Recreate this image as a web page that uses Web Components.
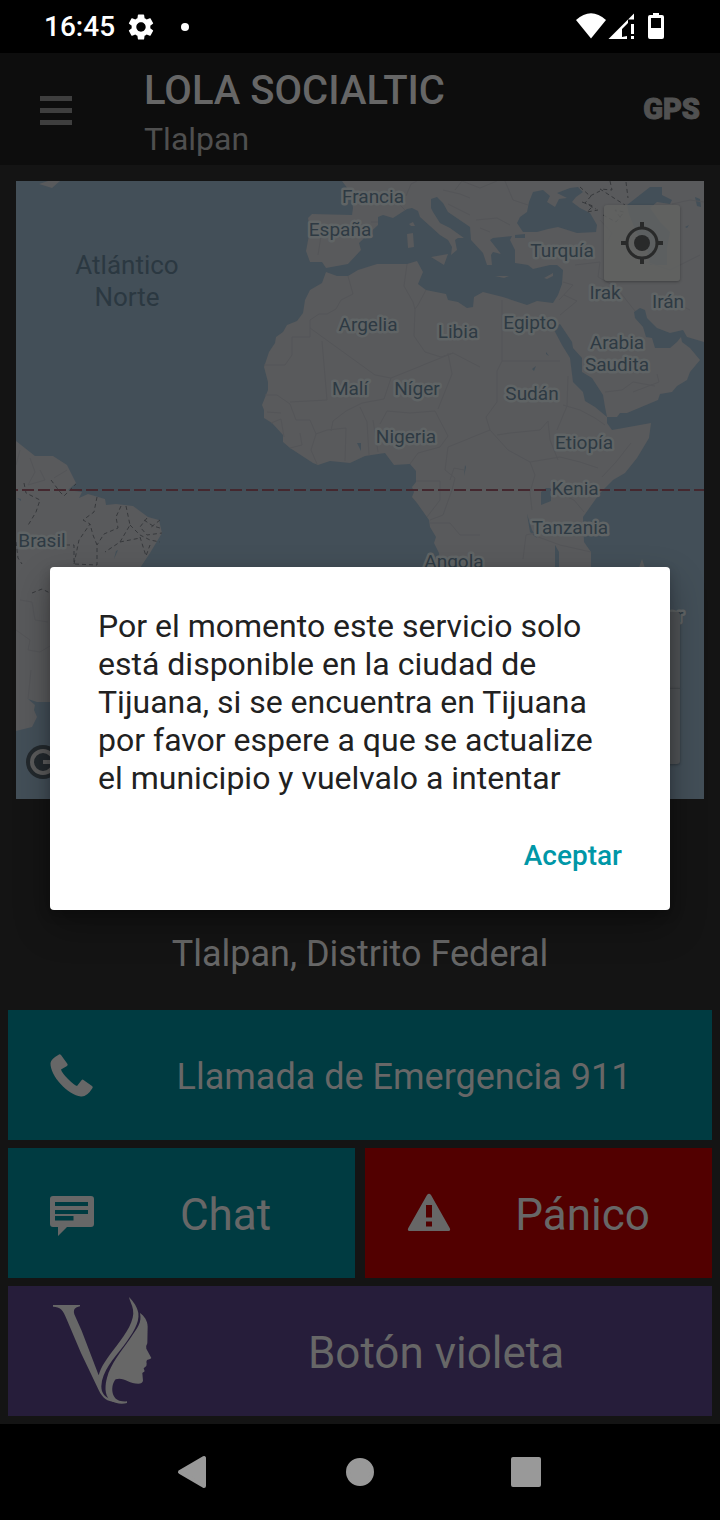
<!DOCTYPE html>
<html lang="es">
<head>
<meta charset="utf-8">
<meta name="viewport" content="width=device-width, initial-scale=1">
<title>Lola Socialtic</title>
<style>
  html, body { margin: 0; background: #141414; }
  body { font-family: Roboto, "Noto Sans", sans-serif; }
</style>
</head>
<body>
<lola-app></lola-app>

<template id="t-app">
  <style>
    :host { display: flex; flex-direction: column; min-height: 100vh; position: relative; background: #141414; color: #666; }
    main { flex: 1; display: flex; flex-direction: column; padding: 16px 8px 8px; }
    world-map { margin: 0 8px; }
    .place { flex: 1; display: flex; align-items: flex-end; justify-content: center; margin: 0; padding-bottom: 35px; font-size: 36px; line-height: 42px; color: #676767; }
    .actions { display: grid; grid-template-columns: 1fr 1fr; gap: 8px 10px; }
    .wide { grid-column: 1 / -1; }
    svg { display: block; width: 100%; }
  </style>
  <status-bar></status-bar>
  <app-header>
    <span slot="title">LOLA SOCIALTIC</span>
    <span slot="subtitle">Tlalpan</span>
  </app-header>
  <main>
    <world-map></world-map>
    <p class="place">Tlalpan, Distrito Federal</p>
    <div class="actions">
      <action-button class="wide" tone="teal">
        <svg slot="icon" viewBox="0 0 48 48" fill="#676767" aria-hidden="true"><path d="M11 3.500Q12 3 13 4L19.500 13Q20 14 19 15L13 18.500Q14 22 20 28Q26 34 29 35L33.500 29.200Q34.500 28 35.500 29L44 35Q45.300 36 44.500 37Q39 46 33 45.500C20 44 2 25 2.500 12Q3 8 11 3.500Z"/></svg>
        Llamada de Emergencia 911
      </action-button>
      <action-button tone="teal" size="large">
        <svg slot="icon" viewBox="0 0 48 48" fill="#676767" aria-hidden="true"><path fill-rule="evenodd" d="M5 7H43Q46 7 46 10V35Q46 38 43 38H19L10 47V38H5Q2 38 2 35V10Q2 7 5 7ZM7 13V17H40V13ZM7 21V25H40V21ZM7 27V31.500H25.500V27Z"/></svg>
        Chat
      </action-button>
      <action-button tone="red" size="large">
        <svg slot="icon" viewBox="0 0 48 48" fill="#676767" aria-hidden="true"><path fill-rule="evenodd" d="M22 6Q24 3.500 26 6L44.700 39Q46 42 43.500 42H4.500Q2 42 3.300 39ZM21 16V28.500H27V16ZM21 32.500V37.500H27V32.500Z"/></svg>
        Pánico
      </action-button>
      <action-button class="wide" tone="violet" size="large">
        <svg slot="icon" viewBox="144 45 336 336" fill="#676767" aria-hidden="true">
          <path d="M159 75H240V79C225 82 219 88 223 103L245 152L296 286C302 260 323 232 350 197C379 160 405 119 399 89C397 74 389 63 387 51C400 64 412 81 415 99C419 130 398 160 371 197C342 236 306 271 304 319C304 338 313 352 331 356L347 367C320 363 309 355 297 332L243 219L200 118C190 90 180 80 159 80Z"/>
          <path d="M420 99C433 108 443 123 443 140L442 190Q437 198 439 206L454 234Q453 237 441 240Q438 245 440 251L439 258L431 265L434 274L427 279L429 302Q427 311 415 311C386 311 370 290 347 298C330 318 335 356 358 362Q370 365 381 364V369C368 373 344 372 331 360C311 347 316 310 321 293C332 251 362 216 390 176C413 143 426 128 420 99Z"/>
        </svg>
        Botón violeta
      </action-button>
    </div>
  </main>
  <nav-bar></nav-bar>
  <alert-dialog>
    Por el momento este servicio solo está disponible en la ciudad de Tijuana, si se encuentra en Tijuana por favor espere a que se actualize el municipio y vuelvalo a intentar
    <span slot="action">Aceptar</span>
  </alert-dialog>
</template>

<template id="t-status">
  <style>
    :host { display: flex; align-items: center; height: 53px; box-sizing: border-box; padding: 0 54px 0 44px; background: #000; color: #fff; }
    time { font-size: 28px; line-height: 34px; font-weight: 500; }
    svg { display: block; fill: #fff; }
    .gear { width: 26px; height: 26px; margin-left: 13px; }
    .dot { width: 8px; height: 8px; border-radius: 50%; background: #fff; margin-left: 27px; }
    .spacer { flex: 1; }
    .icons { width: 90px; height: 28px; }
  </style>
  <time>16:45</time>
  <svg class="gear" viewBox="2 2 20 20" role="img" aria-label="Ajustes"><path d="M19.140 12.940c.04-.3.060-.61.060-.94 0-.32-.02-.64-.07-.94l2.030-1.580c.18-.14.230-.41.120-.61l-1.920-3.320c-.12-.22-.37-.29-.59-.22l-2.390.96c-.5-.38-1.030-.7-1.620-.94l-.36-2.540c-.04-.24-.24-.41-.48-.41h-3.840c-.24 0-.43.170-.47.410l-.36 2.540c-.59.240-1.130.570-1.620.940l-2.390-.96c-.22-.08-.47 0-.59.220L2.740 8.870c-.12.210-.08.470.120.610l2.030 1.580c-.05.300-.09.630-.09.940s.02.640.070.940l-2.030 1.580c-.18.140-.23.410-.12.610l1.920 3.320c.12.220.37.290.59.220l2.390-.96c.5.380 1.030.7 1.620.94l.36 2.540c.05.240.24.410.48.410h3.840c.24 0 .44-.17.470-.41l.36-2.540c.59-.24 1.130-.56 1.620-.94l2.390.96c.22.080.47 0 .59-.22l1.920-3.320c.12-.22.070-.47-.12-.61l-2.010-1.580zM12 15.600c-1.980 0-3.600-1.620-3.600-3.600s1.620-3.600 3.600-3.600 3.600 1.620 3.600 3.600-1.620 3.600-3.600 3.600z"/></svg>
  <span class="dot"></span>
  <span class="spacer"></span>
  <svg class="icons" viewBox="576 13 90 28" role="img" aria-label="Wi-Fi, señal móvil y batería">
    <path d="M576 20Q591 6.500 606 20L591 38.500Z"/>
    <path d="M608.500 39L634 13.500V19.500H628V23L622 29V37L627 36V39Z"/>
    <path d="M631 24H634V34H631ZM631 36H634V39H631Z"/>
    <path fill-rule="evenodd" d="M653 13H659V15H662Q664 15 664 17V37Q664 39 662 39H650Q648 39 648 37V17Q648 15 650 15H653ZM651 18V28H661V18Z"/>
  </svg>
</template>

<template id="t-header">
  <style>
    :host { display: block; }
    header { display: flex; align-items: center; height: 112px; box-sizing: border-box; padding: 0 20px 0 40px; background: #0d0d0d; }
    button { border: 0; background: none; padding: 0; font: inherit; color: inherit; }
    .menu svg { display: block; width: 32px; height: 32px; }
    .titles { flex: 1; margin-left: 72px; padding-top: 12px; min-width: 0; }
    h1 { margin: 0; font-size: 40px; line-height: 48px; font-weight: 500; color: #666; }
    p { margin: 0; font-size: 32px; line-height: 48px; color: #4f4f4f; }
    .gps { font-family: "Liberation Sans Narrow", Roboto, sans-serif; font-weight: 900; font-size: 29px; line-height: 40px; color: #515151; -webkit-text-stroke: 1px #515151; }
  </style>
  <header>
    <button class="menu" aria-label="Menú"><svg viewBox="0 0 32 32" fill="#3e3e3e"><path d="M0 3H32V8H0ZM0 15H32V20H0ZM0 27H32V32H0Z"/></svg></button>
    <div class="titles">
      <h1><slot name="title"></slot></h1>
      <p><slot name="subtitle"></slot></p>
    </div>
    <button class="gps">GPS</button>
  </header>
</template>

<template id="t-map">
  <style>
    :host { display: grid; aspect-ratio: 688 / 618; background: #434f58; overflow: hidden; }
    svg { display: block; width: 100%; height: 100%; }
    .map { grid-area: 1 / 1; }
    .labels { font-size: 19px; text-anchor: middle; fill: #2e3a43; stroke: #606465; stroke-width: 5px; paint-order: stroke; stroke-linejoin: round; }
    .ocean { font-size: 26px; text-anchor: middle; fill: #2b3841; }
    .borders { fill: none; stroke: #545558; stroke-width: 1; }
    .states { fill: none; stroke: #37393c; stroke-width: 1; stroke-dasharray: 4 3; }
    .controls { grid-area: 1 / 1; display: flex; flex-direction: column; justify-content: space-between; justify-self: end; align-self: stretch; padding: 24px 24px 35px 0; }
    button { display: block; width: 76px; height: 76px; border: 0; border-radius: 3px; padding: 0; font: inherit; background: rgba(98, 99, 97, .82); box-shadow: 0 1px 3px rgba(0, 0, 0, .3); }
    .zoom button { background: #505356; border-radius: 3px 3px 0 0; }
    .zoom button + button { border-top: 1px solid #45494c; border-radius: 0 0 3px 3px; }
  </style>
  <svg class="map" viewBox="16 181 688 618" preserveAspectRatio="xMidYMid slice" role="img" aria-label="Mapa">
    <g fill="#595a5c">
      <path d="M342 181L351 193L353 208L352 215L312 214L308 218L310 230L306 251L310 262H322L326 268L348 264L361 250L359 243L378 225V217L383 215L393 218L407 209L412 208L418 211L420 217L440 235L448 240L452 247L451 255L457 250L455 240L458 238L464 238L450 228L440 223L433 212L431 208V199L437 197L443 203L448 212L470 227L471 240L483 253L487 265H492L491 255L493 252L501 254L490 240L493 238L512 236L510 240L515 250V263L528 265L533 269L550 265H557L563 270L562 284L558 295L553 303L537 301L527 305L503 297L483 292L474 297L473 307L467 308L458 302L448 300L446 294L426 290L418 284L423 272L417 261L407 264H377L358 270L348 276L337 276L326 272L322 283L310 290L305 300L303 313L297 321L287 325L283 332L276 337L275 343L269 352L264 367L268 382V390L262 405L264 410V418L272 423L283 435V442L290 448L313 463L318 465L330 461L350 463L365 456L385 453L394 465L410 464L416 471V482L412 487L414 492L412 497L417 503L429 520L430 527L436 537L434 543L439 553L440 580V799H560L591 620V552L584 542L583 517L600 493L613 480L625 473L637 458L649 438L651 423L612 430L607 423V417L595 407L585 401L583 392L573 382L570 358L562 345L553 328L560 324L572 342L573 348L582 358V372L592 378L603 395L605 407L607 417H617L620 413H627L658 400L660 394L672 392L677 386L687 380L690 372L700 360L690 348L682 342L681 337L677 342L670 348H655L652 338L646 337L643 327L635 318L634 312L640 308L645 310L647 318L657 328L670 333L683 330L687 337L704 342V181Z"/>
      <path d="M16 441L35 456H53L67 465L76 483L68 490L82 492L79 498L88 494L105 499L106 505L116 504L133 506L148 517L159 520L162 533L150 553L140 568L110 640L60 702H37L28 699L35 705L34 710L37 717L32 727L16 731Z"/>
      <path d="M409 224L413 222L415 226L411 226ZM407 234L413 233L414 247L408 248ZM431 257L448 254L444 265ZM495 276L509 276L504 278ZM544 278L553 273V276L547 279ZM638 570L642 559L645 568L650 571ZM39 184L48 181H60L52 188Z"/>
    </g>
    <g fill="#434f58">
      <path d="M533 192L543 190L550 196L547 202L555 207L559 199L567 198L557 193L570 188L578 187L583 192L576 197L572 202L580 208L590 213L597 225L596 232L577 233L558 227L548 229L537 232L523 232L517 223L520 217L527 212L529 202ZM515 235L525 234V238L515 238Z"/>
      <path d="M627 205L650 187H662V195L672 200L670 204L657 202L650 208L660 222L670 232L667 248V265H650L647 247L637 234L629 214ZM695 197L700 199L701 207L697 206ZM685 227L689 225L687 228Z"/>
      <path d="M541 492L546 488H551V501L541 505ZM527 514L532 530L537 538L530 532ZM555 545L559 552V569L555 567ZM357 443H361V451ZM465 465L464 476L466 467ZM546 352L549 356L546 354ZM532 369L536 366L534 371ZM17 498L21 499V501ZM118 550L114 559L116 551Z"/>
    </g>
    <g class="borders">
      <path d="M371 222L378 222M318 227L321 236L318 255M395 200L405 210M406 196L411 184L417 181M407 264L404 286L413 302L415 309L414 336L425 352L441 357L453 353L480 367M426 290L418 305L415 309M348 276L353 294L341 300L336 309L327 314H319L310 320V337H292V355L285 365H264M310 328L375 375L391 378L453 353M322 341L327 400L290 402M391 378L384 399L362 403L346 411L333 421L331 431M265 395H277L290 404L296 420H310L316 434L311 450L317 464M267 412L281 413M271 423L281 419L284 437M300 433L302 445L290 448M316 434L327 430L346 428L345 461M360 407L367 422L369 455M373 420L378 452M380 424L387 411L410 413L435 411L448 436L440 447L418 453L410 464M448 353L452 374L438 409M502 300V361L560 361M502 361L497 371V402L486 417L490 430L448 447L445 470L455 478L452 490L443 515L430 520M490 430L508 450L530 462L560 457L580 462L598 468M497 435L510 433L540 430L548 421L550 440L558 460M563 405L580 410L595 418L605 425M568 376L567 406L557 430M631 443L616 462L602 477M530 462L535 475L530 492L532 510M416 481H440L440 500L427 517M430 523L450 523L460 535L480 535M552 490L574 500L584 512M533 535L560 545M464 470L454 468L450 480M560 545L591 552M523 559L526 535L535 533"/>
      <path d="M563 282L573 285L559 300M564 295L577 301L560 315M575 265L600 262L598 277L616 287L635 311M633 392L659 382L657 374M605 392L622 390L633 382L655 386M670 300L690 310M505 181L513 200L528 205M443 190L460 194L470 198M455 190L462 181L480 188L497 181M448 204L470 215M476 220L497 218L510 225M480 228L490 232M600 220L612 233L606 244M640 260L670 270L700 255M672 204L690 200L704 202"/>
      <path d="M30 458L35 472L28 485L45 480L40 470M54 478L67 470M20 450L16 465M20 600L32 602L35 620L48 622M16 630L30 640L28 650L40 652L50 646M31 670L28 699"/>
    </g>
    <g class="states">
      <path d="M51 480L60 492L64 496L76 484M24 483L26 493L40 500L36 512L27 527M16 542L18 558L22 564M97 497L94 512L83 520L90 524L79 540L74 564M66 545H74V564L97 565V545L93 535L90 524M121 506L116 517L118 528L104 534L97 545M126 506L130 525L120 542L105 552M130 525L140 535L150 540L160 542M147 518L140 527L147 535L162 533M144 520L153 526L160 528M140 537L146 556L150 545M32 593L42 589L50 593M160 520L150 528M120 542L140 538"/>
      <path d="M580 187L590 196L600 191M591 196L585 203L596 209M582 202L593 206L587 212L598 210M610 181L612 190L600 189L617 200L625 205M626 182L628 198M603 215L616 222L624 212L615 210L622 220"/>
    </g>
    <path d="M16 490H704" stroke="#44282f" stroke-width="2" stroke-dasharray="12 4" stroke-dashoffset="10" fill="none"/>
    <g class="ocean"><text x="127" y="274">Atlántico</text><text x="127" y="306">Norte</text></g>
    <g class="labels">
      <text x="373" y="203">Francia</text><text x="340" y="236">España</text><text x="562" y="257">Turquía</text>
      <text x="605" y="299">Irak</text><text x="668" y="308">Irán</text><text x="368" y="331">Argelia</text>
      <text x="458" y="338">Libia</text><text x="530" y="329">Egipto</text><text x="617" y="349">Arabia</text>
      <text x="617" y="371">Saudita</text><text x="350" y="395">Malí</text><text x="417" y="395">Níger</text>
      <text x="532" y="400">Sudán</text><text x="406" y="443">Nigeria</text><text x="584" y="449">Etiopía</text>
      <text x="575" y="495">Kenia</text><text x="570" y="534">Tanzania</text><text x="454" y="568">Angola</text>
      <text x="42" y="547">Brasil</text><text x="675" y="622">ar</text>
    </g>
    <circle cx="43" cy="762" r="17" fill="#23292d"/>
    <circle cx="43" cy="762" r="11" fill="none" stroke="#5b5b5b" stroke-width="4"/>
    <path d="M43 762H53" stroke="#5b5b5b" stroke-width="4"/>
  </svg>
  <div class="controls">
    <button aria-label="Mi ubicación">
      <svg viewBox="0 0 76 76" aria-hidden="true" fill="none" stroke="#292a2a"><circle cx="38" cy="38" r="15" stroke-width="3"/><circle cx="38" cy="38" r="8" fill="#292a2a" stroke="none"/><path d="M38 17V24M38 52V59M17 38H24M52 38H59" stroke-width="4"/></svg>
    </button>
    <div class="zoom"><button aria-label="Acercar"></button><button aria-label="Alejar"></button></div>
  </div>
</template>

<template id="t-action">
  <style>
    :host { display: block; --tone: #003b41; }
    :host([tone="red"]) { --tone: #520000; }
    :host([tone="violet"]) { --tone: #261d3a; }
    button { display: flex; align-items: center; width: 100%; height: 130px; border: 0; padding: 0 0 0 40px; background: var(--tone); color: #676767; font: inherit; font-size: 36px; line-height: 52px; }
    :host([size="large"]) button { font-size: 44px; }
    .icon { width: 48px; flex: none; }
    :host([tone="violet"]) .icon { width: 112px; }
    .label { flex: 1; padding-top: 4px; text-align: center; }
  </style>
  <button><span class="icon"><slot name="icon"></slot></span><span class="label"><slot></slot></span></button>
</template>

<template id="t-nav">
  <style>
    :host { display: block; background: #000; }
    nav { display: flex; justify-content: center; align-items: center; gap: 118px; height: 96px; }
    button { width: 48px; height: 48px; padding: 0; border: 0; background: none; }
    svg { display: block; width: 48px; height: 48px; fill: #999; stroke: #999; stroke-width: 4; stroke-linejoin: round; }
  </style>
  <nav>
    <button aria-label="Atrás"><svg viewBox="0 0 48 48"><path d="M10 24L34 10V38Z"/></svg></button>
    <button aria-label="Inicio"><svg viewBox="0 0 48 48"><circle cx="24" cy="24" r="12"/></svg></button>
    <button aria-label="Recientes"><svg viewBox="0 0 48 48"><path d="M11 11H37V37H11Z"/></svg></button>
  </nav>
</template>

<template id="t-dialog">
  <style>
    :host { position: absolute; inset: 53px 0 96px; display: grid; align-items: center; padding: 0 50px; }
    dialog { position: static; box-sizing: border-box; width: 100%; max-width: none; margin: 0; border: 0; border-radius: 4px; padding: 40px 32px 18px 48px; background: #fff; color: #212121; box-shadow: 0 16px 36px rgba(0, 0, 0, .3), 0 4px 12px rgba(0, 0, 0, .2); }
    p { margin: 0 16px 23px 0; font-size: 32px; line-height: 38px; }
    .actions { display: flex; justify-content: flex-end; }
    button { height: 72px; padding: 0 16px; border: 0; background: none; color: #0097a7; font: inherit; font-size: 28px; line-height: 36px; font-weight: 500; }
  </style>
  <dialog open>
    <p><slot></slot></p>
    <div class="actions"><button><slot name="action"></slot></button></div>
  </dialog>
</template>

<script>
  class TemplateElement extends HTMLElement {
    constructor() {
      super();
      const template = document.getElementById(this.constructor.template);
      this.attachShadow({ mode: "open" }).append(template.content.cloneNode(true));
    }
  }
  customElements.define("status-bar", class extends TemplateElement { static template = "t-status"; });
  customElements.define("app-header", class extends TemplateElement { static template = "t-header"; });
  customElements.define("world-map", class extends TemplateElement { static template = "t-map"; });
  customElements.define("action-button", class extends TemplateElement { static template = "t-action"; });
  customElements.define("nav-bar", class extends TemplateElement { static template = "t-nav"; });
  customElements.define("alert-dialog", class extends TemplateElement { static template = "t-dialog"; });
  customElements.define("lola-app", class extends TemplateElement { static template = "t-app"; });
</script>
</body>
</html>
